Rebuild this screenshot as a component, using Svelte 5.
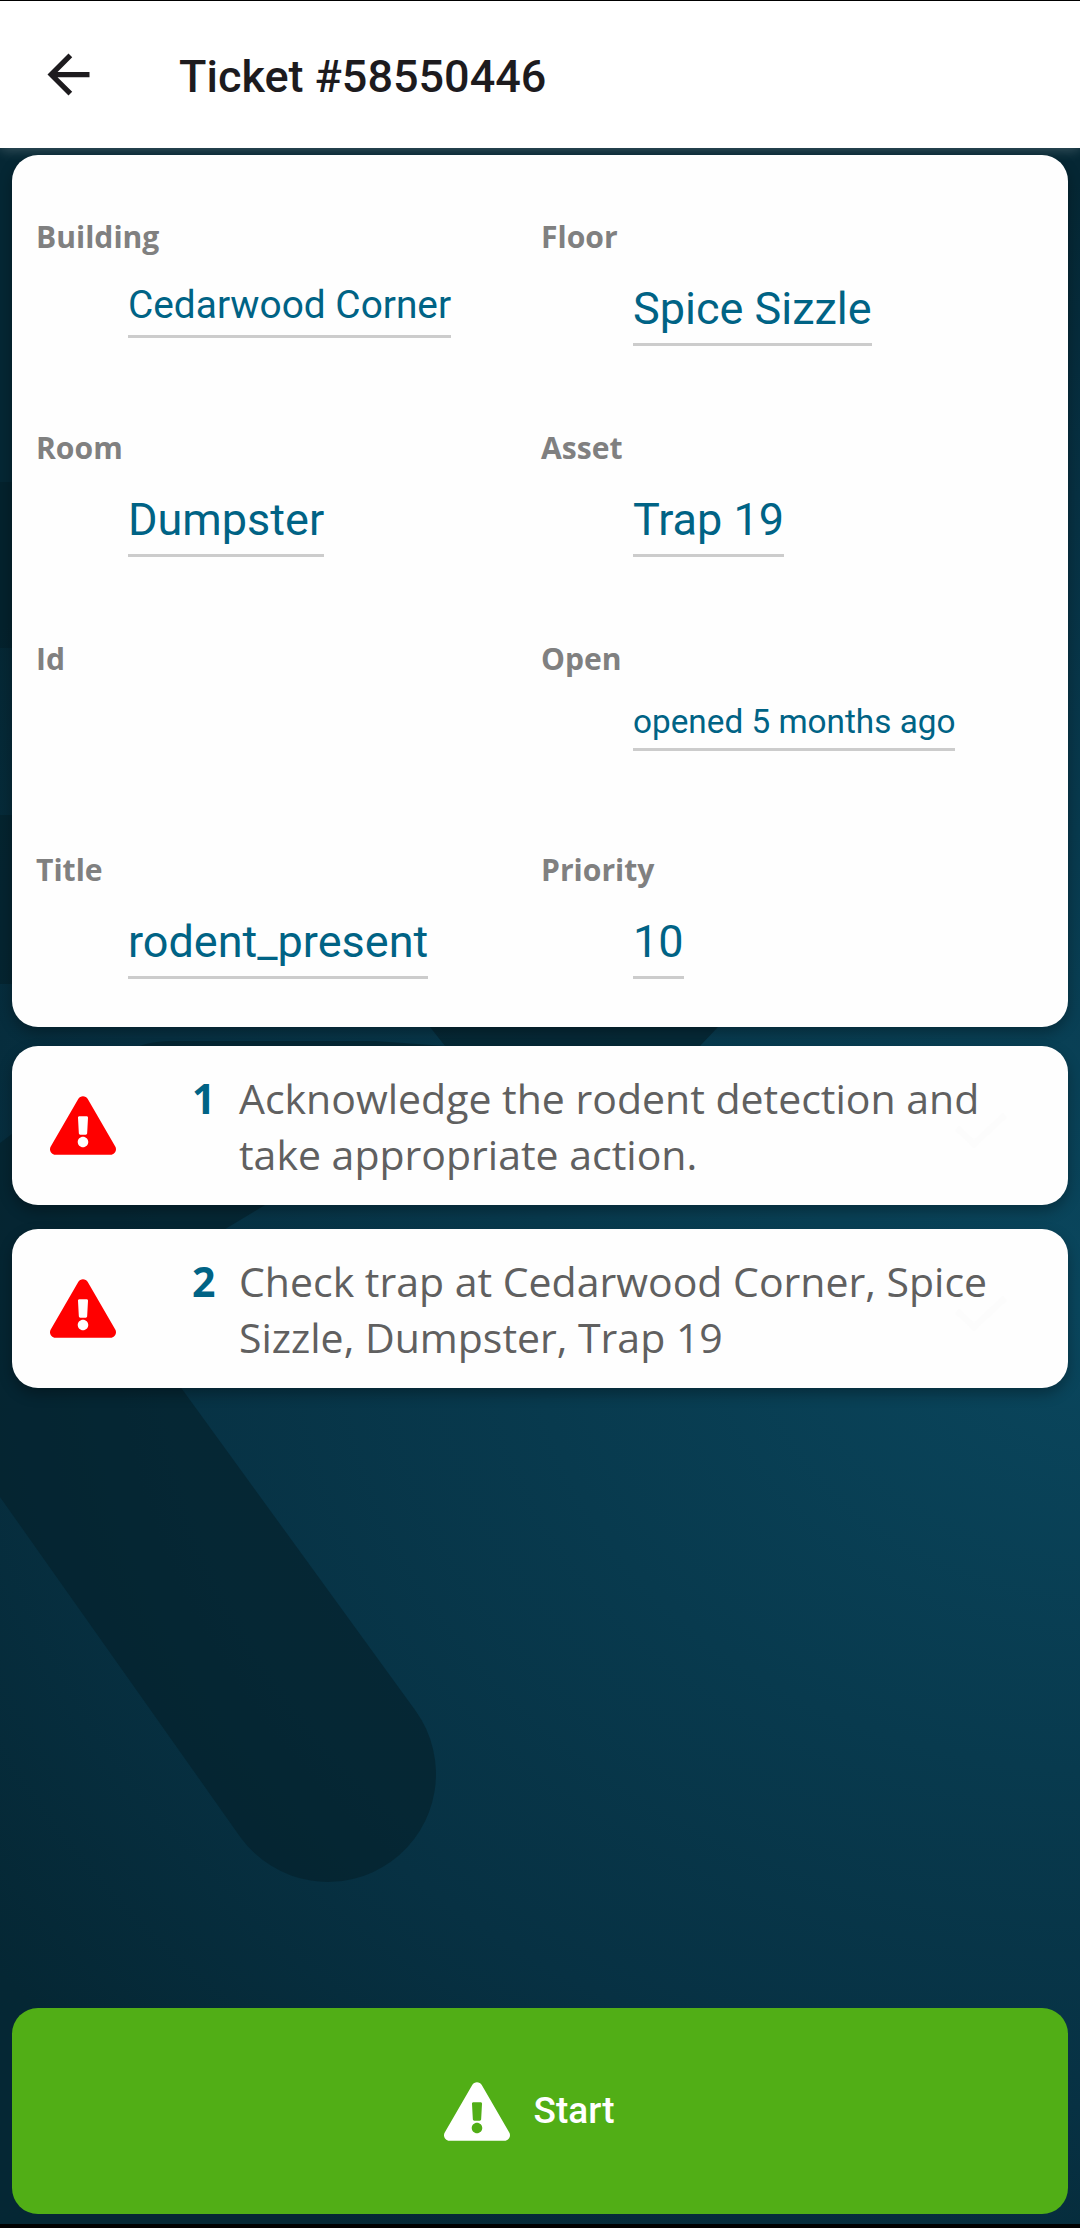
<script>
  const fields = [
    { label: 'Building', value: 'Cedarwood Corner', size: 'medium' },
    { label: 'Floor', value: 'Spice Sizzle', size: 'large' },
    { label: 'Room', value: 'Dumpster', size: 'large' },
    { label: 'Asset', value: 'Trap 19', size: 'large' },
    { label: 'Id', value: '', size: 'large' },
    { label: 'Open', value: 'opened 5 months ago', size: 'small' },
    { label: 'Title', value: 'rodent_present', size: 'large' },
    { label: 'Priority', value: '10', size: 'large' }
  ];
  const steps = [
    'Acknowledge the rodent detection and take appropriate action.',
    'Check trap at Cedarwood Corner, Spice Sizzle, Dumpster, Trap 19'
  ];
</script>

{#snippet warning()}
  <svg class="warning" viewBox="0 0 576 512" aria-hidden="true">
    <path fill="currentColor" d="M569.517 440.013C587.975 472.007 564.806 512 527.94 512H48.054c-36.937 0-59.999-40.055-41.577-71.987L246.423 23.985c18.467-32.009 64.72-31.951 83.154 0l239.94 416.028zM288 354c-25.405 0-46 20.595-46 46s20.595 46 46 46 46-20.595 46-46-20.595-46-46-46zm-43.673-165.346l7.418 136c.347 6.364 5.609 11.346 11.982 11.346h48.546c6.373 0 11.635-4.982 11.982-11.346l7.418-136c.375-6.874-5.098-12.654-11.982-12.654h-63.383c-6.884 0-12.356 5.78-11.981 12.654z" />
  </svg>
{/snippet}

<div class="screen">
  <!-- Oversized brand mark behind the cards -->
  <svg class="backdrop" viewBox="0 0 1080 2228" aria-hidden="true">
    <g fill="#05202a" fill-opacity="0.62">
      <path d="M0 1143C60 1100 110 1041 170 1041H375L445 1046L430 1027L300 840H860L718 1027L700 1046L265 1205L182 1255L100 1276L415.6 1710.8A108 108 0 0 1 240.4 1837.2L0 1497Z" />
      <path d="M0 482H14V648H0Z" />
      <path d="M0 815H14V984H0Z" />
    </g>
  </svg>

  <header>
    <svg class="back" viewBox="0 0 24 24" aria-label="Back">
      <path fill="#1d1b1e" d="M20 11H7.83l5.59-5.59L12 4l-8 8 8 8 1.41-1.41L7.83 13H20v-2z" />
    </svg>
    <h1>Ticket #58550446</h1>
  </header>

  <main>
    <section class="card details">
      {#each fields as field}
        <div class="field">
          <span class="label">{field.label}</span>
          {#if field.value}
            <span class="value {field.size}">{field.value}</span>
          {/if}
        </div>
      {/each}
    </section>

    {#each steps as step, i}
      <section class="card step">
        {@render warning()}
        <b>{i + 1}</b>
        <p>{step}</p>
        <svg class="check" viewBox="0 0 54 36" aria-hidden="true">
          <path d="M3 16L20 32L51 3" fill="none" stroke="#fcfcfc" stroke-width="6" />
        </svg>
      </section>
    {/each}
  </main>

  <button>
    {@render warning()}
    <span>Start</span>
  </button>
</div>

<style>
  :global(body) {
    margin: 0;
  }
  .screen {
    position: relative;
    box-sizing: border-box;
    width: 1080px;
    height: 2228px;
    display: flex;
    flex-direction: column;
    overflow: hidden;
    border-top: 1px solid #000;
    border-bottom: 4px solid #000;
    background: radial-gradient(1400px 1120px at 1120px 1300px, #0a475e 0%, #083a4e 42%, #073143 72%, #052734 100%);
    font-family: 'Open Sans', sans-serif;
  }
  .backdrop {
    position: absolute;
    top: -1px;
    left: 0;
    width: 1080px;
    height: 2228px;
  }
  header {
    position: relative;
    box-sizing: border-box;
    height: 147px;
    display: flex;
    align-items: center;
    padding-left: 37px;
    background: #fff;
    box-shadow: 0 2px 12px rgba(255, 255, 255, 0.22);
  }
  .back {
    width: 63px;
    height: 63px;
  }
  h1 {
    margin: 4px 0 0 79px;
    font: 500 45px/52px Roboto, sans-serif;
    color: #1d1b1e;
  }
  main {
    position: relative;
    flex: 1;
    padding: 7px 12px 0;
  }
  .card {
    box-sizing: border-box;
    border-radius: 26px;
    background: #fefefe;
    box-shadow: 0 6px 14px rgba(0, 0, 0, 0.3);
  }
  .details {
    height: 872px;
    display: grid;
    grid-template-columns: 505px 505px;
    grid-auto-rows: 211px;
    padding: 61px 0 0 24px;
  }
  .field {
    display: flex;
    flex-direction: column;
    align-items: flex-start;
  }
  .label {
    font-size: 30.1px;
    line-height: 42px;
    font-weight: 700;
    color: #808080;
  }
  .value {
    margin: 24px 0 0 92px;
    border-bottom: 3px solid #ccc;
    font-family: Roboto, sans-serif;
    color: #006385;
    white-space: nowrap;
  }
  .large {
    font-size: 45px;
    line-height: 53px;
    padding-bottom: 8px;
  }
  .medium {
    font-size: 38.85px;
    line-height: 46px;
    padding-bottom: 7px;
  }
  .small {
    font-size: 33.3px;
    line-height: 39px;
    margin-top: 22px;
    padding-bottom: 7px;
  }
  .step {
    position: relative;
    height: 159px;
    margin-top: 19px;
    display: flex;
    padding: 24px 0 0 38px;
    font-size: 41px;
    line-height: 56px;
    font-kerning: none;
    color: #606060;
  }
  .step + .step {
    margin-top: 24px;
  }
  .warning {
    width: 66px;
    height: 59px;
    flex: none;
  }
  .step .warning {
    margin: 26px 76px 0 0;
    color: #f00;
  }
  .step b {
    width: 47px;
    color: #006385;
  }
  .step p {
    width: 770px;
    margin: 0;
  }
  .check {
    position: absolute;
    left: 942px;
    top: 66px;
    width: 54px;
    height: 36px;
  }
  button {
    position: relative;
    height: 206px;
    margin: 0 12px 10px;
    padding: 0 22px 0 0;
    border: 0;
    border-radius: 26px;
    display: flex;
    align-items: center;
    justify-content: center;
    gap: 24px;
    background: #51ae16;
    color: #fff;
    font: 500 37px/44px Roboto, sans-serif;
  }
</style>
